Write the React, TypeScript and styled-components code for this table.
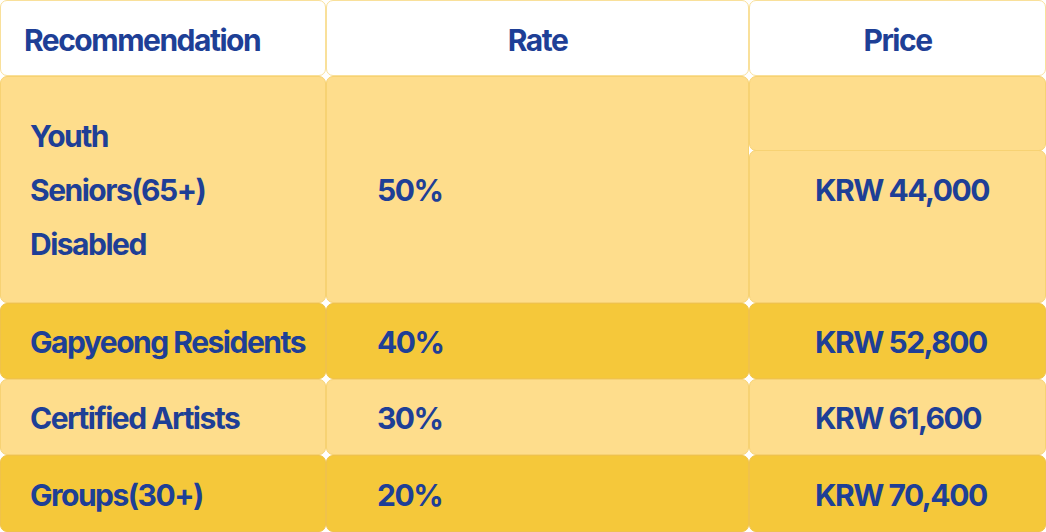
import React from "react";
import styled, { createGlobalStyle } from "styled-components";

const Global = createGlobalStyle`
  html, body { margin: 0; padding: 0; background: #ffffff; }
  body { font-family: Inter, "Noto Sans", sans-serif; }
`;

const Table = styled.div`
  display: grid;
  grid-template-columns: 326px 423px 297px;
  grid-template-rows: 76px 227px 76px 76px 77px;
  width: 1046px;
  height: 532px;
  background: #ffffff;
`;

type Tone = "head" | "light" | "dark";

const bg: Record<Tone, string> = {
  head: "#ffffff",
  light: "#FEDD8C",
  dark: "#F5C83A",
};
const bd: Record<Tone, string> = {
  head: "#F9E09A",
  light: "#F7D273",
  dark: "#F0C24A",
};

const Cell = styled.div<{ $tone: Tone; $align?: "left" | "center"; $pad?: number; $shift?: number }>`
  box-sizing: border-box;
  display: flex;
  align-items: center;
  justify-content: ${(p) => (p.$align === "center" ? "center" : "flex-start")};
  padding-left: ${(p) => (p.$align === "center" ? 0 : p.$pad ?? 29)}px;
  padding-top: ${(p) => p.$shift ?? 0}px;
  background: ${(p) => bg[p.$tone]};
  border: 1px solid ${(p) => bd[p.$tone]};
  border-radius: 7px;
  color: #1E3F96;
  font-family: Inter, "Noto Sans", sans-serif;
  font-weight: 700;
  font-size: 30px;
  letter-spacing: -0.05em;
  white-space: nowrap;
`;

const Stack = styled.div`
  display: flex;
  flex-direction: column;
  justify-content: center;
  gap: 18px;
  line-height: 36px;
  margin-top: 1px;
`;

const SplitColumn = styled.div`
  display: flex;
  flex-direction: column;
  min-height: 0;
`;

const TopSlot = styled(Cell)`
  height: 75px;
  flex: none;
`;

const LowerSlot = styled(Cell)`
  flex: 1;
  align-items: flex-start;
  padding-top: 21px;
  margin-top: -1px;
`;

const rows = [
  { tone: "dark" as Tone, who: "Gapyeong Residents", rate: "40%", price: "KRW 52,800" },
  { tone: "light" as Tone, who: "Certified Artists", rate: "30%", price: "KRW 61,600" },
  { tone: "dark" as Tone, who: "Groups(30+)", rate: "20%", price: "KRW 70,400" },
];

export default function App() {
  return (
    <>
      <Global />
      <Table>
        <Cell $tone="head" $pad={23} $shift={3}>Recommendation</Cell>
        <Cell $tone="head" $align="center" $shift={3}>Rate</Cell>
        <Cell $tone="head" $align="center" $shift={3}>Price</Cell>

        <Cell $tone="light">
          <Stack>
            <span>Youth</span>
            <span>Seniors(65+)</span>
            <span>Disabled</span>
          </Stack>
        </Cell>
        <Cell $tone="light" $pad={50}>50%</Cell>
        <SplitColumn>
          <TopSlot $tone="light" />
          <LowerSlot $tone="light" $pad={65}>KRW 44,000</LowerSlot>
        </SplitColumn>

        {rows.map((r) => (
          <React.Fragment key={r.who}>
            <Cell $tone={r.tone} $shift={2}>{r.who}</Cell>
            <Cell $tone={r.tone} $pad={50} $shift={2}>{r.rate}</Cell>
            <Cell $tone={r.tone} $pad={65} $shift={2}>{r.price}</Cell>
          </React.Fragment>
        ))}
      </Table>
    </>
  );
}
